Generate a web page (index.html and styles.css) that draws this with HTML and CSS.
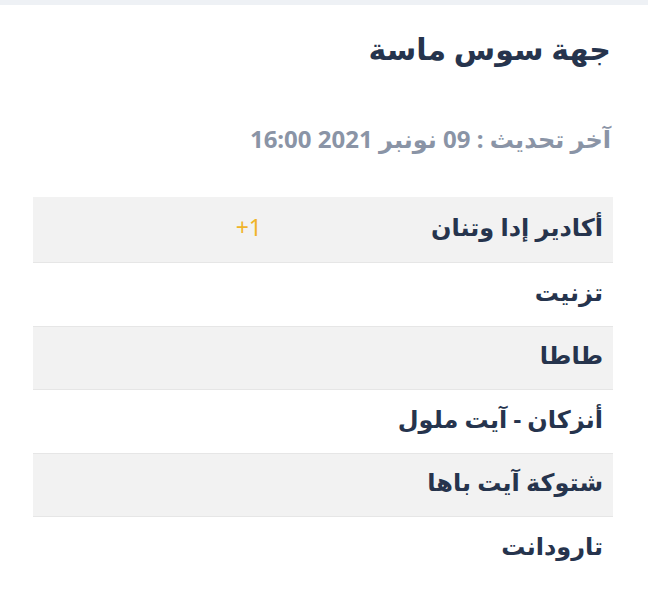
FILE: index.html
```html
<!DOCTYPE html>
<html lang="ar" dir="rtl">
<head>
<meta charset="utf-8">
<link rel="stylesheet" href="styles.css">
</head>
<body>
<div class="topbar"></div>
<main class="card">
  <h1 class="title">جهة سوس ماسة</h1>
  <p class="updated">آخر تحديث : 09 نونبر 2021 16:00</p>
  <div class="table">
    <div class="row alt first"><span class="name">أكادير إدا وتنان</span><span class="count" dir="ltr">+1</span></div>
    <div class="row"><span class="name">تزنيت</span><span class="count"></span></div>
    <div class="row alt"><span class="name">طاطا</span><span class="count"></span></div>
    <div class="row"><span class="name">أنزكان - آيت ملول</span><span class="count"></span></div>
    <div class="row alt"><span class="name">شتوكة آيت باها</span><span class="count"></span></div>
    <div class="row"><span class="name">تارودانت</span><span class="count"></span></div>
  </div>
</main>
</body>
</html>
```
FILE: styles.css
```css
html, body {
  margin: 0;
  padding: 0;
  background: #ffffff;
  font-family: "Noto Sans", "DejaVu Sans", sans-serif;
}
.topbar {
  height: 5px;
  background: #eef1f5;
}
.card {
  padding: 26px 35px 0 33px;
}
.title {
  margin: 0;
  font-size: 30px;
  font-weight: 700;
  color: #26344d;
  line-height: 36px;
  padding-right: 2px;
}
.updated {
  margin: 55px 0 0 0;
  font-size: 24px;
  font-weight: 700;
  color: #8a94a6;
  line-height: 34px;
  padding-right: 2px;
}
.table {
  margin-top: 41px;
}
.row {
  display: grid;
  grid-template-columns: 341px 1fr;
  height: 62.5px;
  align-items: center;
  border-bottom: 1px solid #e6e6e6;
}
.row.first {
  height: 65px;
}
.row:last-child {
  border-bottom: none;
}
.row.alt {
  background: #f2f2f2;
}
.name {
  padding-right: 10px;
  padding-bottom: 5px;
  font-size: 24px;
  font-weight: 700;
  color: #26344d;
  line-height: 34px;
}
.count {
  padding-right: 10px;
  padding-bottom: 5px;
  font-size: 23px;
  color: #f0b429;
  line-height: 34px;
  text-align: right;
}
```
